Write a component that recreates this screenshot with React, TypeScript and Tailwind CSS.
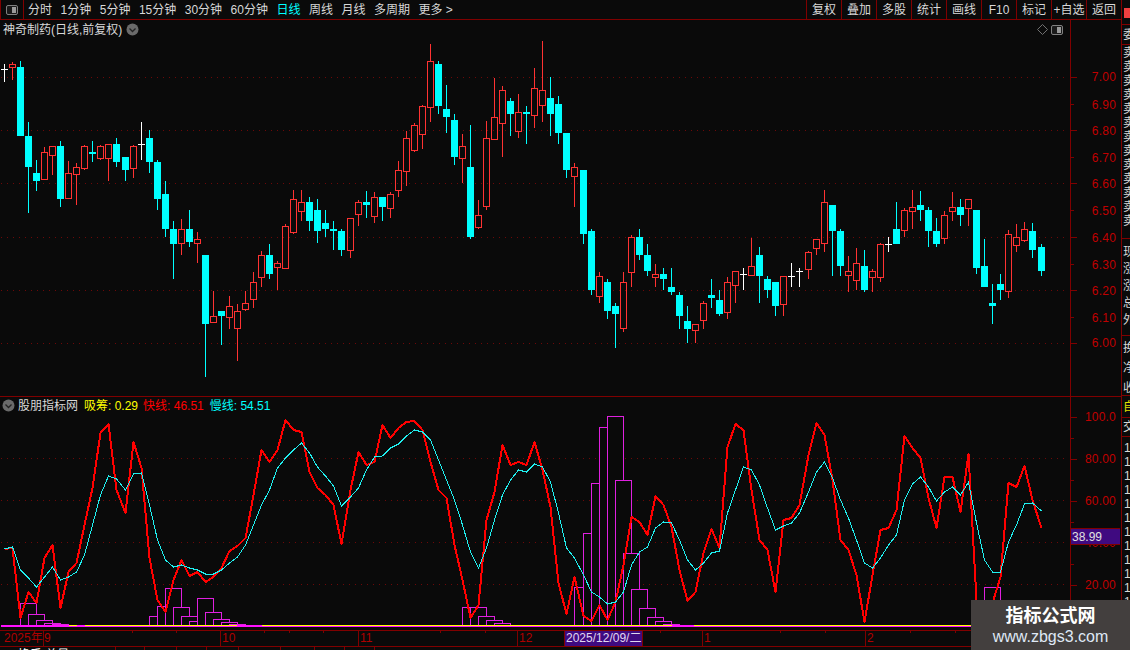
const BG = "#0a0a0a";

// [high, body top, body bottom, low, kind] in page pixels, c = fall, r = rise, w = doji
type Candle = [number, number, number, number, "c" | "r" | "w"];
const candles: Candle[] = [
  [64, 69, 69, 82, "w"], [62, 64, 67, 80, "r"], [61, 67, 136, 136, "c"], [122, 136, 167, 213, "c"],
  [160, 173, 181, 191, "c"], [147, 152, 179, 179, "r"], [146, 146, 155, 175, "r"], [141, 146, 199, 207, "c"],
  [161, 173, 198, 199, "r"], [163, 167, 174, 205, "r"], [145, 146, 168, 170, "r"], [141, 152, 154, 162, "c"],
  [145, 146, 158, 160, "r"], [144, 144, 158, 181, "r"], [138, 144, 162, 167, "c"], [157, 157, 170, 181, "c"],
  [145, 146, 168, 178, "r"], [122, 144, 144, 160, "w"], [130, 138, 162, 173, "c"], [160, 162, 199, 210, "c"],
  [181, 194, 229, 237, "c"], [221, 229, 244, 279, "c"], [219, 229, 243, 255, "r"], [210, 229, 242, 247, "c"],
  [232, 239, 243, 263, "r"], [255, 255, 324, 377, "c"], [291, 316, 322, 322, "r"], [311, 311, 316, 345, "c"],
  [296, 306, 317, 329, "r"], [304, 311, 328, 361, "r"], [291, 303, 309, 311, "r"], [272, 282, 299, 308, "r"],
  [251, 255, 277, 287, "r"], [244, 255, 274, 279, "c"], [261, 263, 267, 290, "r"], [224, 226, 268, 269, "r"],
  [190, 199, 232, 234, "r"], [190, 202, 211, 221, "r"], [197, 202, 221, 231, "c"], [199, 210, 231, 243, "c"],
  [210, 223, 229, 237, "c"], [221, 229, 231, 250, "c"], [229, 231, 250, 256, "c"], [218, 218, 250, 258, "r"],
  [200, 202, 214, 226, "r"], [191, 202, 205, 218, "c"], [192, 197, 216, 223, "r"], [197, 197, 207, 221, "c"],
  [192, 194, 208, 218, "r"], [161, 170, 190, 197, "r"], [131, 138, 171, 186, "r"], [123, 125, 150, 152, "r"],
  [105, 106, 134, 149, "r"], [44, 61, 107, 122, "r"], [61, 64, 106, 114, "c"], [85, 109, 117, 133, "c"],
  [114, 120, 157, 165, "c"], [134, 146, 158, 183, "r"], [125, 167, 237, 239, "c"], [200, 215, 227, 229, "r"],
  [121, 138, 206, 210, "r"], [78, 117, 139, 139, "r"], [86, 90, 123, 157, "r"], [98, 101, 114, 136, "c"],
  [94, 112, 131, 138, "r"], [106, 112, 114, 144, "c"], [68, 88, 115, 128, "r"], [41, 90, 105, 122, "r"],
  [77, 98, 114, 136, "c"], [96, 104, 133, 144, "c"], [133, 133, 170, 178, "c"], [163, 167, 176, 207, "r"],
  [170, 170, 234, 244, "c"], [229, 231, 290, 295, "c"], [272, 276, 296, 303, "r"], [279, 282, 311, 319, "c"],
  [303, 306, 314, 348, "c"], [272, 282, 328, 332, "r"], [235, 237, 272, 287, "r"], [229, 237, 255, 260, "c"],
  [244, 255, 271, 276, "c"], [264, 274, 277, 287, "r"], [268, 274, 279, 290, "c"], [268, 287, 292, 295, "c"],
  [292, 295, 316, 329, "c"], [306, 321, 329, 343, "c"], [324, 324, 330, 343, "r"], [301, 303, 320, 329, "r"],
  [279, 295, 298, 308, "c"], [290, 300, 314, 316, "c"], [277, 282, 312, 319, "r"], [271, 271, 285, 303, "r"],
  [268, 274, 274, 290, "w"], [238, 266, 275, 275, "r"], [247, 255, 276, 303, "c"], [276, 279, 290, 298, "c"],
  [282, 282, 306, 316, "c"], [276, 276, 304, 316, "r"], [263, 276, 276, 287, "w"], [268, 271, 271, 287, "w"],
  [251, 252, 269, 279, "r"], [239, 239, 248, 255, "r"], [190, 202, 243, 252, "r"], [205, 205, 231, 276, "c"],
  [229, 231, 266, 276, "c"], [256, 271, 275, 292, "r"], [248, 263, 280, 290, "r"], [250, 266, 290, 292, "c"],
  [269, 271, 277, 292, "r"], [243, 244, 277, 282, "r"], [237, 244, 244, 252, "w"], [202, 229, 244, 244, "c"],
  [208, 210, 230, 237, "r"], [190, 207, 211, 229, "r"], [191, 205, 210, 221, "c"], [207, 210, 231, 247, "c"],
  [218, 231, 244, 247, "c"], [211, 215, 238, 244, "r"], [192, 207, 211, 221, "r"], [199, 207, 215, 226, "c"],
  [199, 199, 208, 226, "r"], [210, 210, 268, 274, "c"], [239, 266, 287, 287, "c"], [284, 303, 306, 324, "c"],
  [274, 284, 290, 300, "c"], [230, 234, 291, 298, "r"], [224, 237, 245, 252, "r"], [222, 229, 240, 242, "r"],
  [223, 231, 250, 258, "c"], [244, 247, 271, 276, "c"],
];

const fast = [
  549, 548, 618, 592, 603, 558, 545, 608, 572, 563, 525, 488, 433, 424, 490, 513, 442, 468, 558, 600,
  612, 580, 560, 576, 572, 582, 577, 568, 551, 546, 538, 495, 450, 462, 450, 420, 430, 432, 472, 488,
  495, 505, 544, 490, 452, 465, 462, 425, 438, 428, 422, 421, 430, 462, 490, 498, 545, 580, 618, 605,
  520, 492, 445, 465, 462, 465, 442, 470, 507, 583, 614, 577, 616, 621, 605, 620, 602, 565, 517, 522,
  535, 496, 505, 527, 570, 601, 592, 553, 529, 548, 447, 424, 430, 490, 540, 550, 592, 520, 518, 505,
  455, 423, 435, 480, 540, 550, 575, 622, 575, 530, 528, 510, 436, 448, 458, 498, 528, 477, 477, 512,
  454, 600, 625, 603, 577, 483, 487, 466, 500, 528,
];

const slow = [
  549, 547, 570, 578, 587, 577, 567, 580, 577, 572, 555, 525, 495, 476, 479, 490, 474, 473, 505, 540,
  560, 567, 565, 568, 570, 574, 574, 570, 563, 557, 545, 525, 505, 490, 468, 458, 450, 443, 453, 467,
  476, 486, 506, 497, 488, 470, 457, 456, 448, 444, 436, 430, 432, 440, 460, 480, 500, 525, 552, 568,
  548, 520, 495, 480, 470, 472, 464, 467, 482, 513, 548, 558, 575, 592, 597, 604, 602, 592, 565, 552,
  547, 528, 522, 523, 540, 560, 570, 563, 553, 551, 513, 490, 467, 470, 485, 508, 530, 526, 523, 513,
  492, 472, 462, 478, 500, 518, 540, 563, 568, 558, 545, 535, 500, 484, 477, 487, 501, 492, 487, 495,
  482, 523, 560, 572, 572, 542, 525, 504, 503, 511,
];

// index of the candle a bar starts on, and the y of its top
const bars: [number, number][] = [
  [2, 603], [3, 614], [4, 620], [5, 623], [6, 624],
  [18, 616], [19, 606], [20, 588], [21, 607], [22, 616], [23, 621], [24, 598], [25, 612], [26, 619], [27, 622], [28, 624],
  [57, 607], [58, 607], [59, 616], [60, 620], [61, 623],
  [71, 587], [72, 533], [73, 483], [74, 427], [75, 416], [76, 480], [77, 553], [78, 589], [79, 608], [80, 617], [81, 621], [82, 624], [83, 625],
  [122, 587],
];

const cx = (i: number) => Math.floor(4.5 + 8.035 * i);
const linePts = (ys: number[]) => ys.map((y, i) => `${cx(i) + 0.5},${y}`).join(" ");

const Grid = ({ ys }: { ys: number[] }) => (
  <>
    {ys.map((y) => (
      <line key={y} x1={1} x2={1068} y1={y + 0.5} y2={y + 0.5} stroke="#6e0808" strokeDasharray="1 5" />
    ))}
  </>
);

const CandleMark = ({ c, i }: { c: Candle; i: number }) => {
  const [hi, top, bot, lo, kind] = c;
  const x = cx(i);
  if (kind === "w") {
    return (
      <g fill="#ffffff">
        <rect x={x} y={hi} width={1} height={lo - hi} />
        <rect x={x - 3} y={top} width={7} height={1} />
      </g>
    );
  }
  if (kind === "c") {
    return (
      <g fill="#00ffff">
        <rect x={x} y={hi} width={1} height={lo - hi} />
        <rect x={x - 3} y={top} width={7} height={Math.max(bot - top, 2)} />
      </g>
    );
  }
  return (
    <g>
      <rect x={x} y={hi} width={1} height={Math.max(top - hi, 0)} fill="#ff3232" />
      <rect x={x} y={bot} width={1} height={Math.max(lo - bot, 0)} fill="#ff3232" />
      <rect x={x - 2.5} y={top + 0.5} width={6} height={bot - top} fill="none" stroke="#ff3232" />
    </g>
  );
};

const Axis = ({ minY, h, labels, ticks }: { minY: number; h: number; labels: [string, number][]; ticks: number[] }) => (
  <svg width={50} height={h} viewBox={`1071 ${minY} 50 ${h}`} shapeRendering="crispEdges" className="block">
    {ticks.map((y, i) => (
      <rect key={y} x={1071} y={y} width={i % 2 === 0 ? 6 : 3} height={1} fill="#800000" />
    ))}
    {labels.map(([t, y]) => (
      <text key={t} x={1116} y={y + 4} textAnchor="end" fontSize={12} fill="#c00000" letterSpacing={0.2}>
        {t}
      </text>
    ))}
  </svg>
);

const ChevronDot = () => (
  <svg width={13} height={13} viewBox="0 0 13 13" className="shrink-0">
    <circle cx={6.5} cy={6.5} r={6} fill="#6a6a6a" />
    <path d="M3.5 5.5 L6.5 8.5 L9.5 5.5" fill="none" stroke="#222222" strokeWidth={1.3} />
  </svg>
);

const PanelToggle = () => (
  <svg width={12} height={10} viewBox="0 0 12 10" className="block">
    <rect x={0.5} y={0.5} width={11} height={9} rx={1.5} fill="#1a1a1a" stroke="#808080" />
    <rect x={6} y={2} width={4} height={6} fill="#9a9a9a" />
  </svg>
);

const periods = ["分时", "1分钟", "5分钟", "15分钟", "30分钟", "60分钟", "日线", "周线", "月线", "多周期", "更多 >"];
const tools = ["复权", "叠加", "多股", "统计", "画线", "F10", "标记", "+自选", "返回"];

export default function App() {
  return (
    <div className="relative flex w-[1130px] h-[650px] overflow-hidden bg-[#0a0a0a] text-[12px] leading-none text-[#d8d8d8] font-['Liberation_Sans','Noto_Sans_CJK_SC',sans-serif]">
      <div className="flex flex-col w-[1121px] shrink-0">
        {/* toolbar */}
        <div className="flex items-center h-[20px] border-b border-[#800000]">
          <div className="flex items-center justify-center w-[24px] h-full border-x border-[#800000]">
            <PanelToggle />
          </div>
          <div className="flex items-center gap-[8.5px] pl-[4px]">
            {periods.map((p) => (
              <span key={p} className={p === "日线" ? "text-[#00ffff]" : ""}>
                {p}
              </span>
            ))}
          </div>
          <div className="flex h-full ml-auto">
            {tools.map((t) => (
              <div key={t} className="flex items-center justify-center w-[35px] border-l border-[#800000] whitespace-nowrap">
                {t}
              </div>
            ))}
          </div>
        </div>

        {/* price pane */}
        <div className="relative flex h-[377px] border-b border-[#800000]">
          <svg width={1070} height={376} viewBox="0 20 1070 376" shapeRendering="crispEdges" className="block shrink-0">
            <Grid ys={[77, 130, 183, 237, 290, 343]} />
            {candles.map((c, i) => (
              <CandleMark key={i} c={c} i={i} />
            ))}
          </svg>
          <div className="w-[51px] border-l border-[#800000]">
            <Axis
              minY={20}
              h={376}
              labels={[["7.00", 77], ["6.90", 105], ["6.80", 131], ["6.70", 158], ["6.60", 184], ["6.50", 211], ["6.40", 238], ["6.30", 265], ["6.20", 291], ["6.10", 318], ["6.00", 343]]}
              ticks={[77, 104, 130, 157, 183, 210, 237, 264, 290, 317, 343]}
            />
          </div>
          <div className="absolute left-[3px] top-[3px] flex items-center gap-[4px] h-[13px]">
            <span>神奇制药(日线,前复权)</span>
            <ChevronDot />
          </div>
          <div className="absolute left-[1037px] top-[4px] flex items-center gap-[3px]">
            <svg width={11} height={11} viewBox="0 0 11 11" className="block">
              <path d="M5.5 0.5 L10.5 5.5 L5.5 10.5 L0.5 5.5 Z" fill="none" stroke="#707070" />
            </svg>
            <PanelToggle />
          </div>
        </div>

        {/* indicator pane */}
        <div className="relative flex h-[233px]">
          <svg width={1070} height={233} viewBox="0 397 1070 233" shapeRendering="crispEdges" className="block shrink-0">
            <Grid ys={[458, 500, 542, 584]} />
            {bars.map(([i, top]) => (
              <rect key={i} x={cx(i) + 0.5} y={top + 0.5} width={16} height={626 - top} fill={BG} stroke="#e020e0" />
            ))}
            <rect x={1} y={625} width={1069} height={1} fill="#ffff00" />
            <rect x={1} y={626} width={1069} height={1} fill="#ff10ff" />
            <rect x={1} y={625} width={68} height={1} fill="#ff10ff" />
            <rect x={77} y={625} width={8} height={1} fill="#ff10ff" />
            <rect x={237} y={625} width={25} height={1} fill="#ff10ff" />
            <rect x={672} y={625} width={22} height={1} fill="#ff10ff" />
            <polyline points={linePts(fast)} fill="none" stroke="#ff0000" strokeWidth={2} strokeLinejoin="round" />
            <polyline points={linePts(slow)} fill="none" stroke="#20f0f0" strokeWidth={1} />
          </svg>
          <div className="w-[51px] border-l border-[#800000]">
            <Axis
              minY={397}
              h={233}
              labels={[["100.0", 417], ["80.00", 459], ["60.00", 501], ["40.00", 543], ["20.00", 585]]}
              ticks={[417, 438, 459, 480, 501, 522, 543, 564, 585, 606]}
            />
          </div>
          <div className="absolute left-[2px] top-[2px] flex items-center h-[13px] whitespace-nowrap">
            <ChevronDot />
            <span className="ml-[3px]">股朋指标网</span>
            <span className="ml-[6px] text-[#ffff00]">吸筹: 0.29</span>
            <span className="ml-[5px] text-[#ff0000]">快线: 46.51</span>
            <span className="ml-[6px] text-[#00ffff]">慢线: 54.51</span>
          </div>
          <div className="absolute left-[1071px] top-[131px] flex items-center w-[49px] h-[17px] px-[1px] border-y border-[#800000] bg-[#3f0a80] text-[#e0e0e0]">
            38.99
          </div>
        </div>

        {/* time axis */}
        <div className="h-[17px] border-y border-[#800000]">
          <svg width={1121} height={15} viewBox="0 631 1121 15" shapeRendering="crispEdges" className="block">
            {[43, 220, 358, 517, 702, 865].map((x) => (
              <rect key={x} x={x} y={631} width={1} height={15} fill="#800000" />
            ))}
            {[132, 176, 264, 289, 323, 440, 485, 610, 660, 780, 825, 910, 955, 990].map((x) => (
              <rect key={x} x={x} y={631} width={1} height={2} fill="#800000" />
            ))}
            {[["2025年", 4], ["9", 44], ["10", 222], ["11", 360], ["12", 519], ["1", 704], ["2", 867]].map(([t, x]) => (
              <text key={t} x={x} y={642} fontSize={12} fill="#b00000">
                {t}
              </text>
            ))}
            <rect x={564} y={631} width={79} height={15} fill="#3f0a80" />
            <rect x={564} y={631} width={1} height={15} fill="#800000" />
            <rect x={642} y={631} width={1} height={15} fill="#800000" />
            <text x={566} y={642} fontSize={12} fill="#e0d8f0">
              2025/12/09/二
            </text>
          </svg>
        </div>

        {/* status strip, mostly below the window */}
        <div className="flex h-[3px] overflow-hidden text-[12px] text-white">
          <div className="w-[116px] pl-[18px] border-r border-[#800000] whitespace-nowrap pt-[2px]">换手 总量</div>
          {[29, 32, 30, 32, 42, 34, 30, 30].map((w, i) => (
            <div key={i} className="border-r border-[#800000]" style={{ width: w }} />
          ))}
        </div>
      </div>

      {/* quote column, cut off by the window */}
      <div className="flex flex-col w-[9px] border-l border-[#800000] overflow-hidden whitespace-nowrap text-[#d8d8d8]">
        <div className="h-[25px] shrink-0 border-b border-[#800000] pt-[8px] pl-[2px]">
          <div className="w-[7px] h-[10px] bg-[#f04040]" />
        </div>
        <div className="h-[20px] shrink-0 pt-[4px] pl-[1px] border-b border-[#800000]">委比</div>
        <div className="flex flex-col gap-[2px] h-[194px] shrink-0 pt-[2px] pl-[1px] border-b border-[#800000]">
          {Array.from({ length: 13 }, (_, i) => (
            <span key={i}>卖{i}</span>
          ))}
        </div>
        <div className="flex flex-col gap-[5px] h-[97px] shrink-0 pt-[7px] pl-[1px] border-b border-[#800000]">
          {["现手", "涨跌", "涨幅", "总手", "外盘"].map((t) => (
            <span key={t}>{t}</span>
          ))}
        </div>
        <div className="flex flex-col gap-[8px] h-[60px] shrink-0 pt-[6px] pl-[1px] border-b border-[#800000]">
          {["换手", "净资", "收益"].map((t) => (
            <span key={t}>{t}</span>
          ))}
        </div>
        <div className="h-[22px] shrink-0 pt-[5px] pl-[1px] border-b border-[#800000] text-[#e0e000]">自选</div>
        <div className="h-[19px] shrink-0 pt-[3px] pl-[1px] border-b border-[#800000]">交易</div>
        <div className="flex flex-col gap-[2px] pt-[5px] pl-[2px]">
          {Array.from({ length: 12 }, (_, i) => (
            <span key={i}>1{i}</span>
          ))}
        </div>
      </div>

      {/* site watermark */}
      <div className="absolute left-[971px] top-[600px] flex flex-col items-center w-[159px] h-[50px] pt-[6px] bg-[#433f3e] text-[#ffffff]">
        <span className="text-[18px] font-bold leading-[20px]">指标公式网</span>
        <span className="mt-[3px] text-[16px] leading-[16px] text-[#dfe8f5] font-medium">www.zbgs3.com</span>
      </div>
    </div>
  );
}
